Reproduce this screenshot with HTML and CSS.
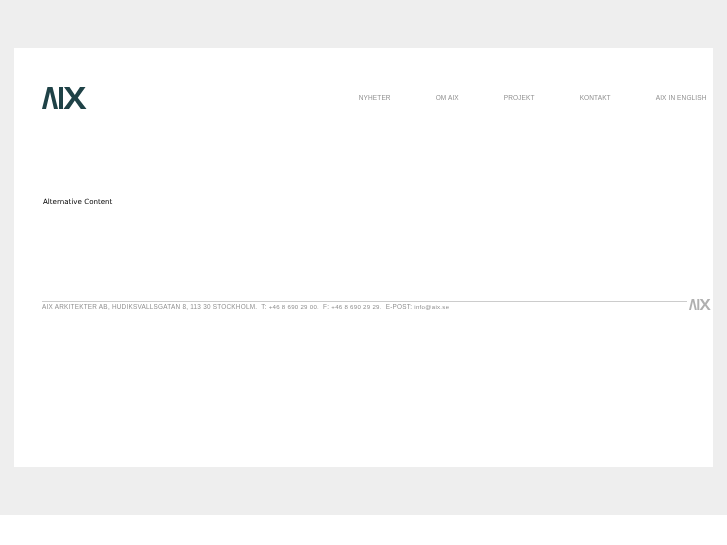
FILE: index.html
```html
<!DOCTYPE html>
<html lang="sv">
<head>
    <meta charset="UTF-8">
    <title>AIX Arkitekter</title>
    <link rel="stylesheet" href="styles.css">
</head>
<body>
    <div class="stage">
        <div class="panel">
            <div class="header">
                <svg class="logo" width="45" height="22" viewBox="0 0 45 22" role="img" aria-label="AIX">
                    <path d="M0 22 L5.5 0 H10.5 L16 22 H12 L8 5 L4 22 Z M17 0 H21 V22 H17 Z M22 0 H27.5 L32.8 8 L38 0 H43.5 L35.8 10.8 L44.5 22 H38.8 L32.8 13.5 L27 22 H21.5 L29.8 10.8 Z"/>
                </svg>
                <ul class="nav">
                    <li>NYHETER</li>
                    <li>OM AIX</li>
                    <li>PROJEKT</li>
                    <li>KONTAKT</li>
                    <li>AIX IN ENGLISH</li>
                </ul>
            </div>

            <p class="alt-content">Alternative Content</p>

            <div class="footer">
                <div class="footer-main">
                    <div class="footer-text">AIX ARKITEKTER AB, HUDIKSVALLSGATAN 8, 113 30 STOCKHOLM.&nbsp; T: <span class="small">+46 8 690 29 00.</span>&nbsp; F: <span class="small">+46 8 690 29 29.</span>&nbsp; E-POST: <span class="small">info@aix.se</span></div>
                </div>
                <svg class="logo-small" width="22" height="11" viewBox="0 0 45 22" role="img" aria-label="AIX">
                    <path d="M0 22 L5.5 0 H10.5 L16 22 H12 L8 5 L4 22 Z M17 0 H21 V22 H17 Z M22 0 H27.5 L32.8 8 L38 0 H43.5 L35.8 10.8 L44.5 22 H38.8 L32.8 13.5 L27 22 H21.5 L29.8 10.8 Z"/>
                </svg>
            </div>
        </div>
    </div>
</body>
</html>
```

FILE: styles.css
```css
/* page */
html, body {
    margin: 0;
    padding: 0;
    background-color: #fff;
}

.stage {
    height: 515px;
    box-sizing: border-box;
    padding: 48px 14px 48px 14px;
    background-color: #eeeeee;
}

.panel {
    height: 419px;
    box-sizing: border-box;
    padding: 38px 0 0 28px;
    background-color: #fff;
}

/* header */
.header {
    display: flex;
    align-items: center;
    justify-content: space-between;
    height: 23px;
}

.logo {
    fill: #1f4247;
    display: block;
}

.nav {
    display: flex;
    gap: 45px;
    margin: 0;
    padding: 0 6.5px 0 0;
    list-style: none;
    font-family: "Liberation Sans", Arial, sans-serif;
    font-size: 6.5px;
    letter-spacing: 0.12px;
    color: #8f8f8f;
    will-change: opacity;
}

/* content */
.alt-content {
    margin: 87px 0 0 1px;
    height: 11px;
    font-family: "DejaVu Sans", Verdana, sans-serif;
    font-size: 7.1px;
    line-height: 11px;
    color: #000;
    will-change: opacity;
}

/* footer */
.footer {
    display: flex;
    align-items: flex-start;
    margin-top: 94px;
}

.footer-main {
    flex: 1;
    border-top: 1px solid #ccc;
}

.footer-text {
    font-family: "Liberation Sans", Arial, sans-serif;
    font-size: 6.4px;
    line-height: 8px;
    margin-top: 1px;
    color: #8f8f8f;
    letter-spacing: 0.24px;
    will-change: opacity;
}

.small {
    font-size: 6.1px;
    letter-spacing: 0.28px;
}

.logo-small {
    fill: #b0b0b0;
    display: block;
    margin: -2px 2px 0 2px;
}
```
